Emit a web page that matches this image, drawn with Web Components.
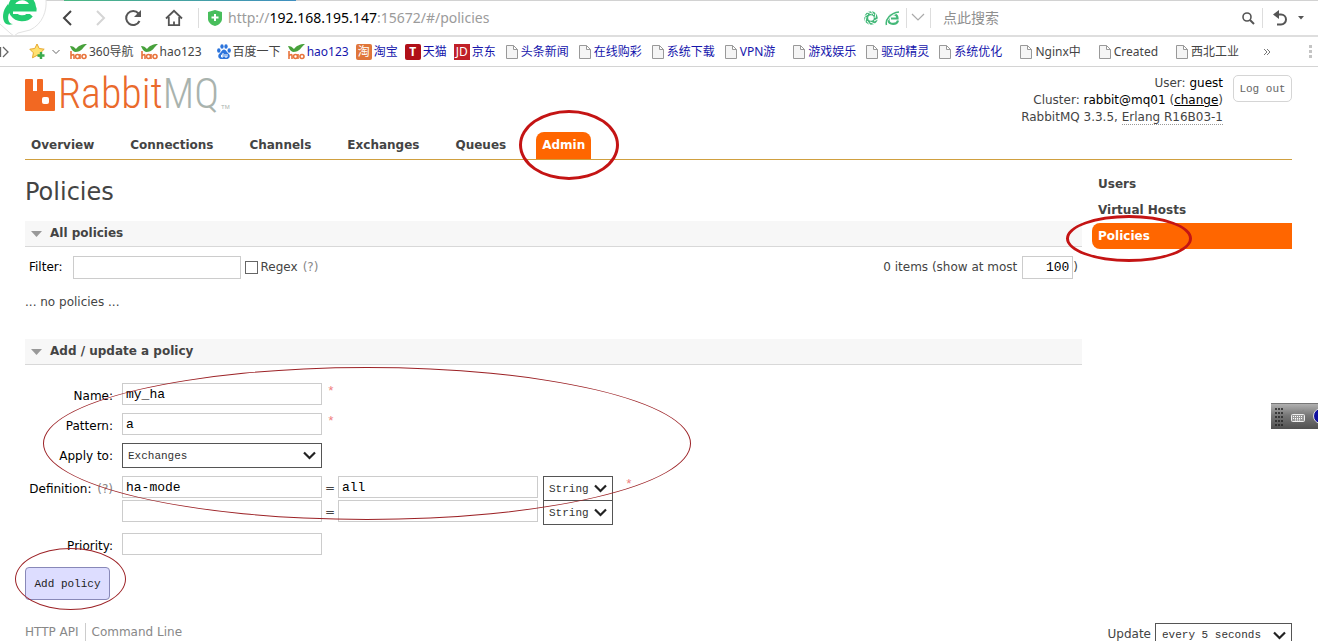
<!DOCTYPE html>
<html lang="zh-CN">
<head>
<meta charset="utf-8">
<title>RabbitMQ Management</title>
<style>
html { scrollbar-width: none; }
body { margin: 0; background: #fff; color: #444; font: 12px/17px "DejaVu Sans", Verdana, "Noto Sans CJK SC", sans-serif; }
</style>
</head>
<body>
<management-page></management-page>
<script>
function define(name, markup) {
  const template = document.createElement('template');
  template.innerHTML = markup;
  customElements.define(name, class extends HTMLElement {
    constructor() {
      super();
      this.attachShadow({ mode: 'open' }).append(template.content.cloneNode(true));
    }
  });
}

/* Hand-drawn style highlight: fills the box given by its user */
define('ring-mark', `
<style>
:host { display: block; position: absolute; pointer-events: none; z-index: 2; box-sizing: border-box; border: 3px solid #c41414; border-radius: 50%; }
:host([thin]) { border: 1px solid #9c2226; }
</style>`);

define('browser-toolbar', `
<style>
:host { display: flex; align-items: center; position: relative; box-sizing: border-box; height: 37px; border-top: 1px solid #d2d2d2; border-bottom: 2px solid #dedede; padding: 0 14px 0 58px; background: #fff; font: 14px/20px "Noto Sans", "Noto Sans CJK SC", sans-serif; }
svg { display: block; flex: none; }
button { border: 0; background: none; padding: 0; margin: 0; }
.logo { position: absolute; left: 0; top: -1px; z-index: 1; }
.load { position: absolute; left: 64px; top: -1px; width: 232px; height: 1px; background: linear-gradient(90deg, #4cb783, #3f8fc0); }
.nav { display: flex; gap: 15px; align-items: center; }
.sep { width: 1px; height: 20px; background: #ddd; flex: none; }
.url { flex: 1; margin-left: 6px; color: #9b9b9b; white-space: nowrap; }
.url b { font-weight: 400; color: #000; }
input { border: 0; outline: 0; padding: 0; width: 290px; margin-left: 12px; font: 14px/20px "Noto Sans", "Noto Sans CJK SC", sans-serif; background: none; }
input::placeholder { color: #8f8f8f; opacity: 1; }
</style>
<span class="load"></span>
<svg class="logo" width="48" height="37" viewBox="0 0 48 37"><path d="M46 0C47 10 43 24 30 30L18 33 14 36 10 33 0 29V0z" fill="#fff"/><path d="M46 0C47 10 43 24 30 30L18 33 14 36 10 33 0 24" fill="none" stroke="#e2e2e2"/><path d="M30.500 14.500A11 10.500 0 1 1 33 7H13" fill="none" stroke="#22cc70" stroke-width="6"/><path d="M13 10.500H37V14H13z" fill="#fff"/><path d="M10 7.500H36.500V11.500H10z" fill="#22cc70"/><path d="M8 4C2 11 2 19 5 23 7 25 10 25 13 24 8 24 6 16 11 10z" fill="#22cc70"/></svg>
<div class="nav">
<button aria-label="Back"><svg width="18" height="18" viewBox="0 0 18 18"><path d="M13 2L6 9l7 7" fill="none" stroke="#444" stroke-width="2"/></svg></button>
<button aria-label="Forward"><svg width="18" height="18" viewBox="0 0 18 18"><path d="M6 2l7 7-7 7" fill="none" stroke="#d5d5d5" stroke-width="2"/></svg></button>
<button aria-label="Reload"><svg width="18" height="18" viewBox="0 0 18 18"><path d="M14.500 4.500A7 7 0 1 0 15.500 12" fill="none" stroke="#555" stroke-width="2"/><path d="M17 1v7h-7z" fill="#555"/></svg></button>
</div>
<button aria-label="Home" style="margin-left:23px"><svg width="18" height="18" viewBox="0 0 18 18"><path d="M1 9.500L9 1.800l8 7.700M3.800 8v8.200h10.400V8M9 16v-3.500" fill="none" stroke="#555" stroke-width="1.800"/></svg></button>
<span class="sep" style="margin-left:15px"></span>
<svg width="14" height="16" viewBox="0 0 14 16" style="margin-left:9px"><path d="M7 0L14 2V9C14 12 11 15 7 16 3 15 0 12 0 9V2z" fill="#48be5c"/><path d="M7 4v7M3.500 7.500h7" stroke="#fff" stroke-width="2"/></svg>
<div class="url">http://<b>192.168.195.147</b>:15672/#/policies</div>
<svg width="14" height="14" viewBox="0 0 14 14"><circle cx="7" cy="7" r="4.800" fill="none" stroke="#43b878" stroke-width="4"/><path d="M7 0l3 4M12 2l-1 5M14 8l-4 2M11 13l-5-2M6 14l-3-4M1 11l1-5M0 6l4-3M3 1l5 2" stroke="#fff" stroke-width="1"/></svg>
<svg width="15" height="15" viewBox="0 0 15 15" style="margin:0 6px 0 7px"><path d="M13 9.500C12 14 4 14 3.500 9.500 3 5 7 2.500 10 3.500c2 .7 2.500 2 2.500 4H6" fill="none" stroke="#43b878" stroke-width="2.200"/><path d="M1 14C0 9 5 2 14 1" fill="none" stroke="#fff" stroke-width="3"/><path d="M1.500 14C0 9 5 2 14 1" fill="none" stroke="#43b878" stroke-width="1.500"/></svg>
<span class="sep"></span>
<svg width="23" height="12" viewBox="0 0 23 12"><path d="M5 2l6 6 6-6" fill="none" stroke="#aaa" stroke-width="1.200"/></svg>
<span class="sep"></span>
<input type="text" placeholder="点此搜索" aria-label="点此搜索">
<svg width="14" height="14" viewBox="0 0 14 14" style="margin:0 7px 0 8px"><circle cx="6" cy="6" r="4" fill="none" stroke="#555" stroke-width="1.600"/><path d="M9 9l4 4" stroke="#555" stroke-width="2"/></svg>
<span class="sep"></span>
<svg width="16" height="18" viewBox="0 0 16 18" style="margin:0 9px 0 10px"><path d="M2 5.500h6a5 5 0 0 1 0 10H4" fill="none" stroke="#555" stroke-width="2"/><path d="M0 5.500L6 1v9z" fill="#555"/></svg>
<svg width="6" height="4" viewBox="0 0 6 4"><path d="M0 0h6L3 3.500z" fill="#555"/></svg>
`);

/* One bookmark; its icon goes in the "icon" slot, a blank page stands in for a missing one */
define('bookmark-link', `
<style>
:host { display: block; flex: none; }
:host([cut]) { margin-right: 8px; }
a { display: flex; align-items: center; gap: 2px; color: var(--ink, #444); text-decoration: none; white-space: nowrap; }
.doc { margin: 0 1px 0 3px; }
svg { display: block; }
</style>
<a href="#"><slot name="icon"><svg class="doc" width="12" height="14" viewBox="0 0 12 14"><path d="M.5.5h7l4 4v9H.5zM7.500.5v4h4" fill="#f5f5f5" stroke="#999"/></svg></slot><slot></slot></a>
`);

const hao = '<svg slot="icon" width="17" height="16" viewBox="0 0 17 16"><path d="M5 8C2 7 1 4 0 2c3 0 4 1 6 3 2-3 6-5 11-5-4 3-5 8-12 8z" fill="#48a13c"/><g fill="none" stroke="#e8743c" stroke-width="1.600"><path d="M1 7v8M1 12q3-3 3 0v3"/><circle cx="7.500" cy="12.500" r="2"/><path d="M10 10v5"/><circle cx="14" cy="12.500" r="2"/></g></svg>';

define('bookmark-bar', `
<style>
:host { display: flex; align-items: center; box-sizing: border-box; height: 30px; border-bottom: 1px solid #d4d4d4; background: #fff; padding-right: 6px; font: 12px/17px "Noto Sans", "Noto Sans CJK SC", sans-serif; overflow: hidden; }
svg { display: block; flex: none; }
.list { display: flex; gap: 7px; flex: 1; margin-left: 10px; }
.b { --ink: #1616ac; }
.i { width: 16px; height: 16px; border-radius: 2px; color: #fff; text-align: center; font: 12px/16px "Noto Sans", "Noto Sans CJK SC", sans-serif; }
</style>
<svg width="9" height="12" viewBox="0 0 9 12"><path d="M.5 1v10M3 1l5 5-5 5" fill="none" stroke="#666" stroke-width="1.300"/></svg>
<svg width="17" height="17" viewBox="0 0 17 17" style="margin-left:20px"><path d="M8 1l2.200 4.500 5 .7-3.700 3.600.9 5L8 12.400 3.500 14.800l.9-5L.8 6.200l5-.7z" fill="#ffe171" stroke="#e7a72c"/><path d="M12 9v7M8.500 12.500h7" stroke="#3aab4e" stroke-width="2.400"/></svg>
<svg width="8" height="8" viewBox="0 0 8 8" style="margin-left:6px"><path d="M.5 2L4 5.500 7.500 2" fill="none" stroke="#666"/></svg>
<div class="list">
<bookmark-link>${hao}360导航</bookmark-link>
<bookmark-link>${hao}hao123</bookmark-link>
<bookmark-link style="margin-left:8px"><svg slot="icon" width="14" height="15" viewBox="0 0 14 15"><g fill="#2c74dc"><ellipse cx="1.800" cy="6.500" rx="1.700" ry="2.200"/><ellipse cx="5" cy="2.500" rx="1.700" ry="2.300"/><ellipse cx="9" cy="2.500" rx="1.700" ry="2.300"/><ellipse cx="12.200" cy="6.500" rx="1.700" ry="2.200"/><path d="M7 5.500c2 0 3 3 5 4.500 2 3-.5 5-2.500 5h-5C2.500 15 0 13 2 10c2-1.500 3-4.500 5-4.500z"/></g><path d="M6 9v4H4.500v-2H6M8 10v3h2v-3" fill="none" stroke="#fff"/></svg>百度一下</bookmark-link>
<bookmark-link class="b">${hao}hao123</bookmark-link>
<bookmark-link class="b"><span slot="icon" class="i" style="background:#e0763a">淘</span>淘宝</bookmark-link>
<bookmark-link class="b"><span slot="icon" class="i" style="background:#b01018;font-weight:700">T</span>天猫</bookmark-link>
<bookmark-link class="b"><span slot="icon" class="i" style="background:#c02028;border-radius:0">JD</span>京东</bookmark-link>
<bookmark-link class="b">头条新闻</bookmark-link>
<bookmark-link class="b">在线购彩</bookmark-link>
<bookmark-link class="b">系统下载</bookmark-link>
<bookmark-link class="b" cut>VPN游</bookmark-link>
<bookmark-link class="b">游戏娱乐</bookmark-link>
<bookmark-link class="b">驱动精灵</bookmark-link>
<bookmark-link class="b" cut>系统优化</bookmark-link>
<bookmark-link cut>Nginx中</bookmark-link>
<bookmark-link cut>Created</bookmark-link>
<bookmark-link>西北工业</bookmark-link>
</div>
<svg width="8" height="8" viewBox="0 0 8 8" style="margin-right:38px"><path d="M1 1l3 3-3 3M4 1l3 3-3 3" fill="none" stroke="#777"/></svg>
<svg width="3" height="14" viewBox="0 0 3 14"><path d="M0 0h3v3H0zM0 5h3v3H0zM0 10h3v3H0z" fill="#c4c4c4"/></svg>
`);

define('app-header', `
<style>
:host { display: flex; justify-content: space-between; align-items: flex-start; box-sizing: border-box; height: 65px; padding-top: 7px; }
.brand { display: flex; gap: 2px; align-items: flex-start; color: #ea6a2c; text-decoration: none; font: 300 42px/34px "Liberation Sans Narrow", "Roboto Condensed", "Liberation Sans", sans-serif; padding-top: 3px; }
.brand i { font-style: normal; color: #a9b3ae; }
.brand small { font: 6px/8px "Liberation Sans", sans-serif; color: #a9b3ae; align-self: flex-end; }
svg { display: block; }
.right { display: flex; gap: 10px; align-items: flex-start; }
.who { text-align: right; padding-top: 1px; }
.who b { font-weight: 400; color: #000; }
.who a { color: #000; text-decoration: underline; }
abbr { text-decoration: none; border-bottom: 1px dotted #999; }
button { box-sizing: border-box; width: 59px; height: 27px; margin-top: 1px; padding: 0; border: 1px solid #d5d5d5; border-radius: 5px; background: #fff; color: #666; font: 11px/16px "Liberation Mono", monospace; }
</style>
<a class="brand" href="#/"><svg width="31" height="34" viewBox="0 0 31 34"><path d="M1 2h6a1 1 0 0 1 1 1v11h4V3a1 1 0 0 1 1-1h4a1 1 0 0 1 1 1v11h11a1 1 0 0 1 1 1v18a1 1 0 0 1-1 1H1a1 1 0 0 1-1-1V3a1 1 0 0 1 1-1z" fill="#f26822"/><rect x="17" y="20" width="7" height="7" rx="2" fill="#fff"/></svg><span>Rabbit<i>MQ</i></span><small>TM</small></a>
<div class="right">
<div class="who">User: <b>guest</b><br>Cluster: <b>rabbit@mq01</b> (<a href="#/cluster-name">change</a>)<br>RabbitMQ 3.3.5, <abbr>Erlang R16B03-1</abbr></div>
<button>Log out</button>
</div>`);

define('nav-tabs', `
<style>
:host { display: block; border-bottom: 1px solid #d0a040; }
nav { display: flex; gap: 24px; height: 27px; }
a { position: relative; box-sizing: border-box; padding: 5px 6px 0; color: #444; font-weight: 700; text-decoration: none; border-radius: 8px 8px 0 0; }
a.on { background: #f60; color: #fff; }
ring-mark { left: -17px; top: -22px; width: 100px; height: 70px; }
</style>
<nav><a href="#/">Overview</a><a href="#/connections">Connections</a><a href="#/channels">Channels</a><a href="#/exchanges">Exchanges</a><a href="#/queues">Queues</a><a class="on" href="#/users">Admin<ring-mark></ring-mark></a></nav>`);

define('side-nav', `
<style>
:host { display: block; padding-top: 11px; }
a { display: block; position: relative; box-sizing: border-box; height: 26px; padding: 5px 6px 0; color: #444; font-weight: 700; text-decoration: none; }
a.on { background: #f60; color: #fff; border-radius: 8px 0 0 8px; }
ring-mark { left: -26px; top: -8px; width: 126px; height: 47px; }
</style>
<nav><a href="#/users">Users</a><a href="#/vhosts">Virtual Hosts</a><a class="on" href="#/policies">Policies<ring-mark></ring-mark></a></nav>`);

define('section-title', `
<style>
:host { display: block; }
h2 { display: flex; align-items: center; gap: 8px; box-sizing: border-box; height: 26px; margin: 0; padding: 0 6px; background: #f7f7f7; border-bottom: 1px solid #d8d8d8; font: 700 12px/17px "DejaVu Sans", Verdana, sans-serif; }
</style>
<h2><svg width="11" height="6" viewBox="0 0 11 6"><path d="M0 0h11L5.500 6z" fill="#999"/></svg><slot></slot></h2>`);

define('list-filter', `
<style>
:host { display: flex; align-items: center; justify-content: space-between; margin: 9px 4px 0 4px; white-space: nowrap; }
div { display: flex; align-items: center; }
label { color: #000; }
label.g { color: #444; }
input[type=text] { box-sizing: border-box; height: 23px; border: 1px solid #ccc; padding: 0 3px; margin: 0; font: 13px/16px "Liberation Mono", monospace; color: #000; }
#f { width: 168px; margin-left: 10px; }
#n { width: 51px; margin-left: 5px; text-align: right; }
input[type=checkbox] { appearance: none; box-sizing: border-box; width: 13px; height: 13px; margin: 0 3px 0 4px; border: 1px solid #666; background: #fff; }
.h { color: #888; margin-left: 5px; }
</style>
<div><label for="f">Filter:</label><input type="text" id="f"><input type="checkbox" id="r"><label class="g" for="r">Regex</label><span class="h">(?)</span></div>
<div><label class="g" for="n">0 items (show at most</label><input type="text" id="n" value="100"><span>)</span></div>`);

const chevron = '<svg width="13" height="9" viewBox="0 0 13 9"><path d="M1 1.500l5.500 5.500L12 1.500" fill="none" stroke="#222" stroke-width="2.200"/></svg>';

define('policy-form', `
<style>
:host { display: block; padding-top: 18px; position: relative; }
form { display: grid; grid-template-columns: 88px 1fr; column-gap: 9px; row-gap: 8px; }
.l { color: #000; text-align: right; white-space: nowrap; padding-top: 5px; }
.l span { color: #888; margin-left: 2px; }
.f { display: flex; align-items: flex-start; }
.f em, .d em { font: 13px/17px "Liberation Mono", monospace; color: #f08080; margin-left: 5px; }
input { box-sizing: border-box; width: 200px; height: 22px; border: 1px solid #ccc; padding: 0 3px; margin: 0; font: 13px/16px "Liberation Mono", monospace; color: #000; background: #fff; }
.s { position: relative; display: block; width: 200px; }
.s svg { position: absolute; right: 6px; top: 8px; pointer-events: none; }
select { appearance: none; display: block; box-sizing: border-box; width: 100%; height: 25px; border: 1px solid #555; border-radius: 0; padding: 0 5px; margin: 0; background: #fff; color: #333; font: 11px/16px "Liberation Mono", monospace; }
.d { display: grid; grid-template-columns: 200px 16px 200px 75px auto; grid-auto-rows: 24px; justify-content: start; margin-bottom: 1px; }
.d .s { width: 70px; margin-left: 5px; }
.d .eq { text-align: center; line-height: 24px; }
.d em { margin-left: 12px; }
button { display: block; box-sizing: border-box; width: 85px; height: 33px; margin-top: 12px; padding: 0; border: 1px solid #8888b8; border-radius: 4px; background: #ddf; color: #222; font: 11px/16px "Liberation Mono", monospace; }
.one { left: 18px; top: 2px; width: 648px; height: 153px; }
.act { position: relative; grid-column: 1 / -1; margin-top: -8px; width: 85px; }
.two { left: -10px; top: -7px; width: 111px; height: 62px; }
</style>
<form onsubmit="return false">
<label class="l" for="name">Name:</label><div class="f"><input id="name" value="my_ha"><em>*</em></div>
<label class="l" for="pattern">Pattern:</label><div class="f"><input id="pattern" value="a"><em>*</em></div>
<label class="l" for="apply">Apply to:</label><div class="f"><span class="s"><select id="apply"><option>Exchanges</option></select>${chevron}</span></div>
<label class="l" for="k1">Definition: <span>(?)</span></label>
<div class="d"><input id="k1" value="ha-mode"><span class="eq">=</span><input value="all" aria-label="Value 1"><span class="s"><select aria-label="Type 1"><option>String</option></select>${chevron}</span><em>*</em>
<input aria-label="Key 2"><span class="eq">=</span><input aria-label="Value 2"><span class="s"><select aria-label="Type 2"><option>String</option></select>${chevron}</span></div>
<label class="l" for="priority">Priority:</label><div class="f"><input id="priority"></div>
<div class="act"><button>Add policy</button><ring-mark thin class="two"></ring-mark></div>
</form>
<ring-mark thin class="one"></ring-mark>`);

define('page-footer', `
<style>
:host { display: flex; justify-content: space-between; margin-top: 23px; height: 25px; }
.links { display: flex; height: 20px; line-height: 18px; }
.links a { color: #888; text-decoration: none; }
.links a + a { border-left: 1px solid #ccc; margin-left: 6px; padding-left: 6px; }
.u { display: flex; align-items: flex-start; gap: 4px; }
.u label { line-height: 22px; }
.s { position: relative; display: block; width: 137px; }
.s svg { position: absolute; right: 6px; top: 8px; pointer-events: none; }
select { appearance: none; display: block; box-sizing: border-box; width: 100%; height: 25px; border: 1px solid #555; border-radius: 0; padding: 0 6px 2px; margin: 0; background: #fff; color: #333; font: 11px/16px "Liberation Mono", monospace; }
</style>
<div class="links"><a href="api/">HTTP API</a><a href="cli/">Command Line</a></div>
<div class="u"><label for="every">Update</label><span class="s"><select id="every"><option>every 5 seconds</option></select>${chevron}</span></div>`);

/* Floating input-method bar docked at the window's right edge */
define('ime-bar', `
<style>
:host { display: block; position: absolute; right: 0; top: 403px; width: 47px; height: 26px; overflow: hidden; border-top: 1px solid #777; box-sizing: border-box; background: linear-gradient(#b0b0b0, #777 45%, #505050); }
svg { display: block; }
</style>
<svg width="47" height="25" viewBox="0 0 47 25"><path d="M4 5h8M4 9h8M4 13h8M4 17h8M4 21h8" stroke="#222" stroke-width="1.500" stroke-dasharray="2 1"/><path d="M23 10l4-3 3 1 3-2" fill="none" stroke="#888"/><rect x="20.500" y="10.500" width="13" height="7" rx="1" fill="#999" stroke="#eee"/><path d="M22 12.500h10M22 14.500h10M24 16h6" stroke="#fff" stroke-dasharray="1 1"/><circle cx="50" cy="12" r="7.500" fill="#1010a0" stroke="#ddd"/></svg>`);

define('management-page', `
<style>
:host { display: block; position: relative; }
.app { padding: 0 26px 0 25px; }
.cols { display: grid; grid-template-columns: minmax(0, 1fr) 200px; gap: 10px; }
h1 { font: 24px/30px "DejaVu Sans", Verdana, sans-serif; margin: 17px 0 14px; }
p { margin: 15px 0 28px; }
</style>
<browser-toolbar></browser-toolbar>
<bookmark-bar></bookmark-bar>
<div class="app">
<app-header></app-header>
<nav-tabs></nav-tabs>
<div class="cols">
<main><h1>Policies</h1>
<section-title>All policies</section-title>
<list-filter></list-filter>
<p>... no policies ...</p>
<section-title>Add / update a policy</section-title>
<policy-form></policy-form></main>
<side-nav></side-nav>
</div>
<page-footer></page-footer>
</div>
<ime-bar></ime-bar>`);
</script>
</body>
</html>
